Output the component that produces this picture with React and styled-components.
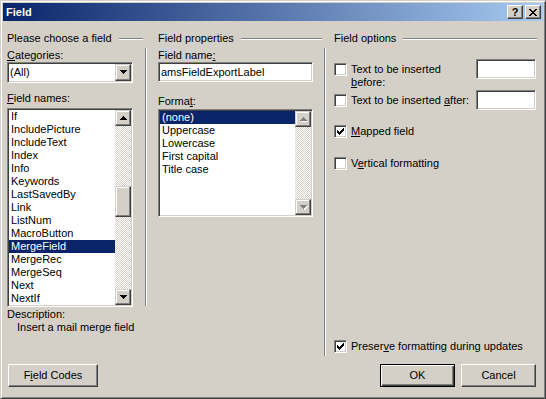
import React from "react";
import styled, { createGlobalStyle, css } from "styled-components";

const FACE = "#d4d0c8";

const GlobalStyle = createGlobalStyle`
  html, body {
    margin: 0;
    padding: 0;
    background: ${FACE};
  }
  body {
    font-family: "Liberation Sans", Arial, sans-serif;
    font-size: 11px;
    color: #000;
  }
`;

// win2k bevels
const raised = css`
  border: 1px solid;
  border-color: #fff #404040 #404040 #fff;
  box-shadow: inset -1px -1px #808080, inset 1px 1px ${FACE};
  background: ${FACE};
`;

const scrollRaised = css`
  border: 1px solid;
  border-color: ${FACE} #404040 #404040 ${FACE};
  box-shadow: inset -1px -1px #808080, inset 1px 1px #fff;
  background: ${FACE};
`;

const sunken = css`
  border: 1px solid;
  border-color: #808080 #fff #fff #808080;
  box-shadow: inset 1px 1px #404040, inset -1px -1px ${FACE};
  background: #fff;
`;

const Window = styled.div`
  box-sizing: border-box;
  width: 546px;
  height: 399px;
  padding: 2px;
  border: 1px solid;
  border-color: ${FACE} #404040 #404040 ${FACE};
  box-shadow: inset 1px 1px #fff, inset -1px -1px #808080;
  background: ${FACE};
  display: flex;
  flex-direction: column;
  font-family: "Liberation Sans", Arial, sans-serif;
  font-size: 11px;
  line-height: 13px;
`;

const TitleBar = styled.div`
  flex: none;
  height: 18px;
  margin-bottom: 1px;
  padding: 0 2px;
  display: flex;
  align-items: center;
  background: linear-gradient(to right, #0a246a, #a6caf0);
`;

const Title = styled.div`
  flex: 1;
  padding-left: 1px;
  color: #fff;
  font-weight: bold;
`;

const CaptionButton = styled.div`
  box-sizing: border-box;
  width: 16px;
  height: 14px;
  ${raised}
  display: flex;
  align-items: center;
  justify-content: center;
  font-weight: bold;
  font-size: 11px;
  line-height: 11px;
  & + & {
    margin-left: 2px;
  }
`;

const Body = styled.div`
  flex: 1;
  display: flex;
  flex-direction: column;
  padding: 10px 0 0 4px;
`;

const Columns = styled.div`
  display: grid;
  grid-template-columns: 138px 179px 1fr;
  align-items: start;
`;

const Column = styled.div`
  display: flex;
  flex-direction: column;
`;

const GroupHeader = styled.div`
  height: 13px;
  display: flex;
  align-items: center;
  padding-left: ${(p) => p.$indent || 0}px;
  margin-right: ${(p) => p.$end || 0}px;
  white-space: nowrap;
`;

const EtchedLine = styled.div`
  flex: 1;
  height: 0;
  margin-left: 7px;
  border-top: 1px solid #808080;
  border-bottom: 1px solid #fff;
`;

const Section = styled.div`
  box-sizing: border-box;
  height: ${(p) => p.$h}px;
  margin-top: 3px;
  border-left: 1px solid #808080;
  box-shadow: inset 1px 0 #fff;
  display: flex;
  flex-direction: column;
  padding: ${(p) => p.$pad};
`;

const Label = styled.div`
  height: 13px;
  white-space: nowrap;
  margin-top: ${(p) => p.$mt || 0}px;
  padding-left: ${(p) => p.$indent || 0}px;
`;

const Key = styled.u`
  text-decoration: underline;
`;

const ComboBox = styled.div`
  box-sizing: border-box;
  width: 126px;
  height: 21px;
  padding: 1px;
  ${sunken}
  display: flex;
`;

const ComboValue = styled.div`
  flex: 1;
  padding-left: 1px;
  display: flex;
  align-items: center;
`;

const DropButton = styled.div`
  box-sizing: border-box;
  width: 16px;
  ${scrollRaised}
  display: flex;
  align-items: center;
  justify-content: center;
`;

const TextBox = styled.input`
  box-sizing: border-box;
  width: ${(p) => p.$w}px;
  height: 20px;
  margin: 0;
  padding: 0 0 0 2px;
  ${sunken}
  font: inherit;
  color: #000;
  outline: none;
  flex: none;
`;

const ListBox = styled.div`
  box-sizing: border-box;
  width: ${(p) => p.$w}px;
  height: ${(p) => p.$h}px;
  margin-top: ${(p) => p.$mt || 0}px;
  padding: 1px;
  ${sunken}
  display: flex;
`;

const ListItems = styled.div`
  flex: 1;
  overflow: hidden;
`;

const ListItem = styled.div`
  height: 13px;
  padding-left: 2px;
  white-space: nowrap;
  background: ${(p) => (p.$selected ? "#0a246a" : "transparent")};
  color: ${(p) => (p.$selected ? "#fff" : "#000")};
`;

const ScrollBar = styled.div`
  width: 16px;
  display: flex;
  flex-direction: column;
`;

const ScrollButton = styled.div`
  box-sizing: border-box;
  height: 16px;
  ${scrollRaised}
  display: flex;
  align-items: center;
  justify-content: center;
`;

const Track = styled.div`
  flex: 1;
  background: repeating-conic-gradient(#fff 0 25%, ${FACE} 0 50%) 0 0 / 2px 2px;
`;

const Thumb = styled.div`
  box-sizing: border-box;
  height: ${(p) => p.$h}px;
  margin-top: ${(p) => p.$top}px;
  ${scrollRaised}
`;

const OptionRow = styled.div`
  display: flex;
  align-items: ${(p) => p.$align || "center"};
  margin-top: ${(p) => p.$mt || 0}px;
  min-height: ${(p) => p.$h || 13}px;
`;

const CheckLabel = styled.div`
  display: flex;
  align-items: flex-start;
  gap: 4px;
  margin-top: ${(p) => p.$mt || 0}px;
`;

const CheckBox = styled.div`
  box-sizing: border-box;
  width: 13px;
  height: 13px;
  flex: none;
  ${sunken}
  display: flex;
  align-items: center;
  justify-content: center;
`;

const Spacer = styled.div`
  flex: 1;
`;

const ButtonRow = styled.div`
  display: flex;
  margin-top: 8px;
  padding: 0 7px 0 1px;
`;

const PushButton = styled.div`
  box-sizing: border-box;
  width: ${(p) => p.$w}px;
  height: 23px;
  ${raised}
  display: flex;
  align-items: center;
  justify-content: center;
  ${(p) =>
    p.$default &&
    css`
      border: 1px solid #000;
      box-shadow: inset 1px 1px #fff, inset -1px -1px #404040,
        inset -2px -2px #808080;
    `}
  & + & {
    margin-left: 6px;
  }
`;

function Arrow({ up, disabled }) {
  const rows = up ? [1, 3, 5, 7] : [7, 5, 3, 1];
  const draw = (dx, color) =>
    rows.map((w, i) => (
      <rect
        key={`${dx}-${i}`}
        x={(7 - w) / 2 + dx}
        y={i + dx}
        width={w}
        height={1}
        fill={color}
      />
    ));
  return (
    <svg width="8" height="5" shapeRendering="crispEdges" style={{ marginLeft: 1 }}>
      {disabled ? (
        <>
          {draw(1, "#fff")}
          {draw(0, "#808080")}
        </>
      ) : (
        draw(0, "#000")
      )}
    </svg>
  );
}

function CheckMark() {
  const cols = [2, 3, 4, 3, 2, 1, 0];
  return (
    <svg width="7" height="7" shapeRendering="crispEdges">
      {cols.map((y, x) => (
        <rect key={x} x={x} y={y} width={1} height={3} fill="#000" />
      ))}
    </svg>
  );
}

function CloseGlyph() {
  return (
    <svg width="8" height="7" shapeRendering="crispEdges">
      {[0, 1, 2, 3, 4, 5, 6].map((i) => (
        <g key={i}>
          <rect x={i} y={i} width={2} height={1} fill="#000" />
          <rect x={6 - i} y={i} width={2} height={1} fill="#000" />
        </g>
      ))}
    </svg>
  );
}

function Check({ checked }) {
  return <CheckBox>{checked && <CheckMark />}</CheckBox>;
}

function List({ items, selected, w, h, mt, thumb }) {
  return (
    <ListBox $w={w} $h={h} $mt={mt}>
      <ListItems>
        {items.map((item) => (
          <ListItem key={item} $selected={item === selected}>
            {item}
          </ListItem>
        ))}
      </ListItems>
      <ScrollBar>
        <ScrollButton>
          <Arrow up disabled={!thumb} />
        </ScrollButton>
        <Track>{thumb && <Thumb $top={thumb.top} $h={thumb.h} />}</Track>
        <ScrollButton>
          <Arrow disabled={!thumb} />
        </ScrollButton>
      </ScrollBar>
    </ListBox>
  );
}

const fieldNames = [
  "If",
  "IncludePicture",
  "IncludeText",
  "Index",
  "Info",
  "Keywords",
  "LastSavedBy",
  "Link",
  "ListNum",
  "MacroButton",
  "MergeField",
  "MergeRec",
  "MergeSeq",
  "Next",
  "NextIf"
];

const formats = ["(none)", "Uppercase", "Lowercase", "First capital", "Title case"];

export default function App() {
  return (
    <>
      <GlobalStyle />
      <Window>
        <TitleBar>
          <Title>Field</Title>
          <CaptionButton>?</CaptionButton>
          <CaptionButton>
            <CloseGlyph />
          </CaptionButton>
        </TitleBar>
        <Body>
          <Columns>
            <Column>
              <GroupHeader $end={2}>
                Please choose a field
                <EtchedLine />
              </GroupHeader>
              <Label $mt={4}>
                <Key>C</Key>ategories:
              </Label>
              <ComboBox>
                <ComboValue>(All)</ComboValue>
                <DropButton>
                  <Arrow />
                </DropButton>
              </ComboBox>
              <Label $mt={9}>
                <Key>F</Key>ield names:
              </Label>
              <List
                items={fieldNames}
                selected="MergeField"
                w={126}
                h={199}
                mt={3}
                thumb={{ top: 60, h: 31 }}
              />
              <Label $mt={1}>Description:</Label>
              <Label $indent={10}>Insert a mail merge field</Label>
            </Column>

            <Column>
              <GroupHeader $indent={13} $end={2}>
                Field properties
                <EtchedLine />
              </GroupHeader>
              <Section $h={258} $pad="1px 0 0 12px">
                <Label>
                  Field name<Key>:</Key>
                </Label>
                <TextBox $w={155} readOnly value="amsFieldExportLabel" />
                <Label $mt={13}>
                  Forma<Key>t</Key>:
                </Label>
                <List items={formats} selected="(none)" w={155} h={108} mt={1} />
              </Section>
            </Column>

            <Column>
              <GroupHeader $indent={10} $end={6}>
                Field options
                <EtchedLine />
              </GroupHeader>
              <Section $h={308} $pad="11px 7px 3px 9px">
                <OptionRow $align="flex-start" $h={30}>
                  <CheckLabel $mt={4}>
                    <Check />
                    <div>
                      Text to be inserted
                      <br />
                      <Key>b</Key>efore:
                    </div>
                  </CheckLabel>
                  <Spacer />
                  <TextBox $w={60} readOnly value="" />
                </OptionRow>
                <OptionRow $mt={1} $h={20}>
                  <CheckLabel>
                    <Check />
                    <div>
                      Text to be inserted <Key>a</Key>fter:
                    </div>
                  </CheckLabel>
                  <Spacer />
                  <TextBox $w={60} readOnly value="" />
                </OptionRow>
                <OptionRow $mt={15}>
                  <CheckLabel>
                    <Check checked />
                    <div>
                      <Key>M</Key>apped field
                    </div>
                  </CheckLabel>
                </OptionRow>
                <OptionRow $mt={19}>
                  <CheckLabel>
                    <Check />
                    <div>
                      V<Key>e</Key>rtical formatting
                    </div>
                  </CheckLabel>
                </OptionRow>
                <Spacer />
                <OptionRow>
                  <CheckLabel>
                    <Check checked />
                    <div>
                      Preser<Key>v</Key>e formatting during updates
                    </div>
                  </CheckLabel>
                </OptionRow>
              </Section>
            </Column>
          </Columns>

          <ButtonRow>
            <PushButton $w={90}>
              F<Key>i</Key>eld Codes
            </PushButton>
            <Spacer />
            <PushButton $w={75} $default>
              OK
            </PushButton>
            <PushButton $w={75}>Cancel</PushButton>
          </ButtonRow>
        </Body>
      </Window>
    </>
  );
}
